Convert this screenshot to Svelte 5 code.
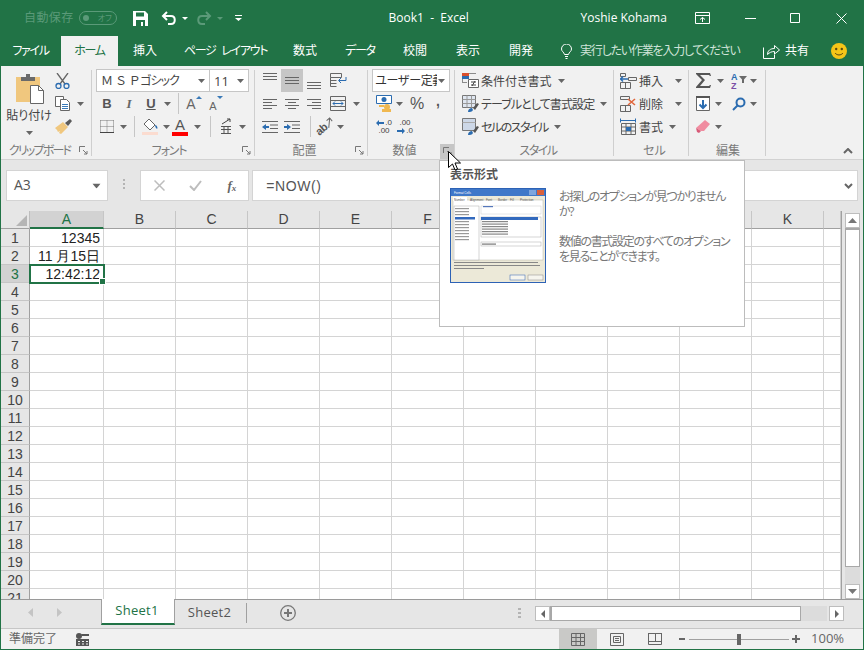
<script>
  const tabs = [
    ['ファイル', 'w61 k'], ['ホーム', 'w57 on k'], ['挿入', 'w54'], ['ページ レイアウト', 'w107 k'],
    ['数式', 'w52'], ['データ', 'w58 k'], ['校閲', 'w52'], ['表示', 'w54'], ['開発', 'w52']
  ];
  const cols = ['A', 'B', 'C', 'D', 'E', 'F', 'G', 'H', 'I', 'J', 'K', ''];
  const rows = Array.from({ length: 21 }, (_, i) => i + 1);
  const cells = { 1: '12345', 2: '11 月15日', 3: '12:42:12' };
</script>

{#snippet caret()}
  <svg class="caret" width="7" height="4" viewBox="0 0 7 4"><path d="M0 0h7L3.5 4z" /></svg>
{/snippet}

{#snippet launcher()}
  <svg width="9" height="9" viewBox="0 0 9 9" fill="none" stroke="#777"><path d="M.5 6V.5H6" /><path d="M4 4l4 4M8 5v3H5" /></svg>
{/snippet}

<div class="win">
  <header class="title">
    <span class="autosave">自動保存</span>
    <span class="toggle"><i></i><b>オフ</b></span>
    <svg class="qs save" width="15" height="15" viewBox="0 0 15 15"><path fill="#fff" d="M0 0h12l3 3v12H0z" /><path fill="#217346" d="M3 1.500h8v4H3zM3 9h9v6H3z" /><path fill="#fff" d="M8 11h2v4H8z" /></svg>
    <svg class="qs undo" width="16" height="15" viewBox="0 0 16 15" fill="none" stroke="#fff" stroke-width="2"><path d="M6 1L2 5l4 4" /><path d="M2 5h8c5 0 5 8 0 8H7" /></svg>
    <svg class="qc" width="6" height="3" viewBox="0 0 6 3"><path fill="#fff" d="M0 0h6L3 3z" /></svg>
    <svg class="qs redo" width="16" height="15" viewBox="0 0 16 15" fill="none" stroke="#5b9a79" stroke-width="2"><path d="M10 1l4 4-4 4" /><path d="M14 5H6c-5 0-5 8 0 8h3" /></svg>
    <svg class="qc" width="6" height="3" viewBox="0 0 6 3"><path fill="#5b9a79" d="M0 0h6L3 3z" /></svg>
    <svg class="qs cust" width="7" height="6" viewBox="0 0 7 6"><path fill="#fff" d="M0 0h7v1H0zM0 3h7L3.500 6z" /></svg>
    <span class="book">Book1 &nbsp;-&nbsp; Excel</span>
    <span class="user">Yoshie Kohama</span>
    <svg class="disp" width="15" height="12" viewBox="0 0 15 12" fill="none" stroke="#fff"><path d="M.5 .5h14v11H.5zM.5 3.500h14M7.500 10V5.500M5 7.500l2.500-2 2.500 2" /></svg>
    <svg class="wmin" width="11" height="1" viewBox="0 0 11 1"><path fill="#fff" d="M0 0h11v1H0z" /></svg>
    <svg class="wmax" width="10" height="10" viewBox="0 0 10 10" fill="none" stroke="#fff"><path d="M.5 .5h9v9h-9z" /></svg>
    <svg class="wclose" width="11" height="11" viewBox="0 0 11 11" fill="none" stroke="#fff"><path d="M.5 .5l10 10M10.500 .5l-10 10" /></svg>
  </header>

  <nav class="tabs">
    {#each tabs as [label, cls]}
      <span class="tab {cls}">{label}</span>
    {/each}
    <svg class="bulb" width="11" height="15" viewBox="0 0 11 15" fill="none" stroke="#fff"><path d="M3.500 10.500C3 8 .5 7.500 .5 5a5 5 0 0 1 10 0c0 2.500-2.500 3-3 5.500zM4 12.500h3M4.500 14.500h2" /></svg>
    <span class="tell">実行したい作業を入力してください</span>
    <svg class="share" width="17" height="15" viewBox="0 0 17 15" fill="none" stroke="#fff"><path d="M.5 3.500v11h11v-4" /><path d="M4.500 10.500c0-4 3-6 7-6V1.500l5 4.500-5 4V7.500c-3 0-5 1-7 3z" /></svg>
    <span class="kyoyu">共有</span>
    <svg class="smile" width="16" height="16" viewBox="0 0 16 16"><circle cx="8" cy="8" r="8" fill="#f5c518" /><circle cx="5.200" cy="6" r="1.200" fill="#5b4a10" /><circle cx="10.800" cy="6" r="1.200" fill="#5b4a10" /><path d="M4 10c2 2.600 6 2.600 8 0" fill="none" stroke="#5b4a10" /></svg>
  </nav>

  <section class="ribbon">
    <div class="group g-clip">
      <div class="body clipbody">
        <div class="paste">
          <svg width="29" height="30" viewBox="0 0 29 30"><path fill="#f0c77e" d="M0 3h24v25H0z" /><path fill="#6a6a6a" d="M5 3h14v4H5zM10 0h4v3h-4z" /><path fill="#fff" stroke="#666" d="M14.500 11.500h8l5 5v13h-13z" /><path fill="none" stroke="#666" d="M22.500 11.500v5h5" /></svg>
          <span class="pastelabel">貼り付け</span>
          {@render caret()}
        </div>
        <div class="col clipcol">
          <div class="row">
            <svg width="15" height="16" viewBox="0 0 15 16" fill="none"><path stroke="#666" stroke-width="1.300" d="M2 0l8 11M13 0L5 11" /><circle cx="3.500" cy="13" r="2.500" stroke="#2b6cb0" stroke-width="1.300" /><circle cx="11.500" cy="13" r="2.500" stroke="#2b6cb0" stroke-width="1.300" /></svg>
          </div>
          <div class="row">
            <svg width="16" height="15" viewBox="0 0 16 15" fill="#fff" stroke="#666"><path d="M.5 .5h8v10h-8z" /><path d="M5.500 3.500h6l3 3v8h-9z" /><path stroke="#3a7ab8" d="M7 8.500h6M7 10.500h6M7 12.500h6" /></svg>
            <span class="t w18">{@render caret()}</span>
          </div>
          <div class="row">
            <svg width="17" height="15" viewBox="0 0 17 15"><path fill="#5a5a5a" d="M10 4l5-4 2 2-4 5z" /><path fill="#f0c77e" d="M0 9l8-6 5 5-7 7-2-1 1-2-2 1-1-2z" /></svg>
          </div>
        </div>
      </div>
      <div class="glabel">クリップボード</div>
      <span class="launch">{@render launcher()}</span>
    </div>

    <div class="group g-font">
      <div class="body col">
        <div class="row">
          <span class="combo fontname"><span class="ctext"><span class="fnlat">Ｍ Ｓ Ｐ</span><span class="fnkana">ゴシック</span></span>{@render caret()}</span>
          <span class="combo fontsize"><span class="ctext">11</span>{@render caret()}</span>
        </div>
        <div class="row">
          <span class="t w22 fb">B</span>
          <span class="t w22 fi">I</span>
          <span class="t w22 fu">U</span>
          <span class="t w11">{@render caret()}</span>
          <span class="vs s5"></span>
          <span class="t w30 bigA">A<svg width="6" height="3" viewBox="0 0 6 3"><path fill="#3a7ab8" d="M3 0l3 3H0z" /></svg></span>
          <span class="t w14 smallA">A<svg width="6" height="3" viewBox="0 0 6 3"><path fill="#3a7ab8" d="M0 0h6L3 3z" /></svg></span>
        </div>
        <div class="row">
          <span class="t w22"><svg width="14" height="13" viewBox="0 0 14 13" fill="none" stroke="#777" stroke-dasharray="1 1"><path d="M.5 .5h13M.5 6.500h13M.5 .5v11M7 .5v11M13.500 .5v11" /><path stroke="#444" stroke-dasharray="none" d="M0 12.500h14" /></svg></span>
          <span class="t w10">{@render caret()}</span>
          <span class="vs s6"></span>
          <span class="t w30"><svg width="17" height="17" viewBox="0 0 17 17"><path fill="#fff" stroke="#666" d="M7 1l6 6-5 5-6-6z" /><path fill="#2b6cb0" d="M13 7c2 0 3 3 2 4-1-1-2-2-2-4z" /><path fill="#fbdcd0" d="M0 14h16v3H0z" /></svg></span>
          <span class="t w2">{@render caret()}</span>
          <span class="t w26 colorA">A<i></i></span>
          <span class="t w8">{@render caret()}</span>
          <span class="vs s8"></span>
          <span class="t w30"><svg width="12" height="17" viewBox="0 0 12 17" fill="none" stroke="#555"><path d="M2 6l8-5M7 1h3v3" stroke="#444" /><path d="M1 8.500h10M1 11.500h10M1 15.500h10M4 8v8M8 8v8" /></svg></span>
          <span class="t w2">{@render caret()}</span>
        </div>
      </div>
      <div class="glabel">フォント</div>
      <span class="launch">{@render launcher()}</span>
    </div>

    <div class="group g-align">
      <div class="body col">
        <div class="row">
          <span class="t w22 top"><svg width="14" height="7" viewBox="0 0 14 7" fill="#666"><path d="M0 0h14v1H0zM0 3h14v1H0zM0 6h14v1H0z" /></svg></span>
          <span class="t w22 pressed"><svg width="14" height="7" viewBox="0 0 14 7" fill="#666"><path d="M0 0h14v1H0zM0 3h14v1H0zM0 6h14v1H0z" /></svg></span>
          <span class="t w22 bot"><svg width="14" height="7" viewBox="0 0 14 7" fill="#666"><path d="M0 0h14v1H0zM0 3h14v1H0zM0 6h14v1H0z" /></svg></span>
          <span class="t w26"><svg width="17" height="15" viewBox="0 0 17 15" fill="none" stroke="#666"><path d="M.5 .5h11v4h-11zM.5 4.500v9M.5 7.500h6M.5 10.500h6M.5 13.500h6" /><path stroke="#2b6cb0" d="M16 4v3.500H9M11 5L8.500 7.500 11 10" /></svg></span>
        </div>
        <div class="row">
          <span class="t w22"><svg width="14" height="10" viewBox="0 0 14 10" fill="#666"><path d="M0 0h14v1H0zM0 3h9v1H0zM0 6h14v1H0zM0 9h9v1H0z" /></svg></span>
          <span class="t w22"><svg width="14" height="10" viewBox="0 0 14 10" fill="#666"><path d="M0 0h14v1H0zM3 3h8v1H3zM0 6h14v1H0zM3 9h8v1H3z" /></svg></span>
          <span class="t w22"><svg width="14" height="10" viewBox="0 0 14 10" fill="#666"><path d="M0 0h14v1H0zM5 3h9v1H5zM0 6h14v1H0zM5 9h9v1H5z" /></svg></span>
          <span class="t w26"><svg width="16" height="15" viewBox="0 0 16 15" fill="none" stroke="#666"><path d="M.5 .5h15v14H.5zM.5 4.500h15M.5 10.500h15" /><path stroke="#2b6cb0" d="M3 7.500h10M5 5.500l-2 2 2 2M11 5.500l2 2-2 2" /></svg></span>
          <span class="t w10">{@render caret()}</span>
        </div>
        <div class="row">
          <span class="t w22"><svg width="16" height="12" viewBox="0 0 16 12" fill="#666"><path d="M0 0h16v1H0zM8 3.500h8v1H8zM8 7h8v1H8zM0 11h16v1H0z" /><path fill="#2b6cb0" d="M0 6l4-3v2h3v2H4v2z" /></svg></span>
          <span class="t w22"><svg width="16" height="12" viewBox="0 0 16 12" fill="#666"><path d="M0 0h16v1H0zM8 3.500h8v1H8zM8 7h8v1H8zM0 11h16v1H0z" /><path fill="#2b6cb0" d="M7 6L3 3v2H0v2h3v2z" /></svg></span>
          <span class="vs s7"></span>
          <span class="t w28 orient"><span class="ab">ab</span><svg width="9" height="9" viewBox="0 0 9 9" fill="none" stroke="#666"><path d="M1 8l7-7M4 1h4v4" /></svg></span>
          <span class="t w2">{@render caret()}</span>
        </div>
      </div>
      <div class="glabel">配置</div>
      <span class="launch">{@render launcher()}</span>
    </div>

    <div class="group g-num">
      <div class="body col">
        <div class="row">
          <span class="combo numfmt"><span class="clip ctext">ユーザー定義</span>{@render caret()}</span>
        </div>
        <div class="row">
          <span class="t w24"><svg width="17" height="17" viewBox="0 0 17 17"><path fill="#fff" stroke="#2b6cb0" d="M.5 .5h15v8H.5z" /><circle cx="8" cy="4.500" r="2.500" fill="#2b6cb0" /><circle cx="11" cy="12" r="3" fill="#f0b850" /><path fill="#f0b850" d="M3 10h5v2H3zM6 14h9v3H6z" /></svg></span>
          <span class="t w6">{@render caret()}</span>
          <span class="t w30 pct">%</span>
          <span class="t w12 comma">,</span>
        </div>
        <div class="row">
          <span class="t w24 dec"><svg width="8" height="6" viewBox="0 0 8 6" fill="#2b6cb0"><path d="M0 3l3-3v2h5v2H3v2z" /></svg><em>.0</em><b>.00</b></span>
          <span class="t w18 dec"><b>.00</b><svg width="8" height="6" viewBox="0 0 8 6" fill="#2b6cb0"><path d="M8 3L5 0v2H0v2h5v2z" /></svg><em>.0</em></span>
        </div>
      </div>
      <div class="glabel">数値</div>
      <span class="launch hot">{@render launcher()}</span>
    </div>

    <div class="group g-style">
      <div class="body col">
        <div class="row item">
          <svg width="17" height="15" viewBox="0 0 17 15"><path fill="#d9502e" d="M0 0h7v3H0z" /><path fill="#2b6cb0" d="M0 3h7v3H0z" /><path fill="#8b8b8b" d="M7 0h7v1H7zM0 6h1v4H0zM0 9h5v1H0z" /><path fill="#fff" stroke="#666" d="M6.500 6.500h10v8h-10z" /><path stroke="#444" d="M9 9h5M9 12h5M10 13l3-5" fill="none" /></svg>
          <span class="txt">条件付き書式</span>{@render caret()}
        </div>
        <div class="row item">
          <svg width="17" height="17" viewBox="0 0 17 17"><path fill="#dfe6f0" stroke="#777" d="M.5 .5h13v12H.5z" /><path fill="none" stroke="#999" d="M.5 4.500h13M.5 8.500h13M5 .5v12M9.500 .5v12" /><path fill="#2b6cb0" d="M6 17c0-3 2-4 4-4l1 2c-1 2-3 2-5 2z" /><path fill="#555" d="M11 13l4-5 2 1-4 6z" /></svg>
          <span class="txt tight">テーブルとして書式設定</span>{@render caret()}
        </div>
        <div class="row item">
          <svg width="17" height="17" viewBox="0 0 17 17"><path fill="#cdd8e8" stroke="#777" d="M.5 .5h13v12H.5z" /><path fill="none" stroke="#aaa" d="M.5 4.500h13" /><path fill="#2b6cb0" d="M6 17c0-3 2-4 4-4l1 2c-1 2-3 2-5 2z" /><path fill="#555" d="M11 13l4-5 2 1-4 6z" /></svg>
          <span class="txt tighter">セルのスタイル</span>{@render caret()}
        </div>
      </div>
      <div class="glabel">スタイル</div>
    </div>

    <div class="group g-cell">
      <div class="body col">
        <div class="row item">
          <svg width="17" height="16" viewBox="0 0 17 16" fill="none" stroke="#666"><path d="M.5 .5h5v3h-5zM.5 9.500h10v6H.5zM5.500 9.500v6M8.500 4.500h8v3h-8z" /><path stroke="#2b6cb0" stroke-width="1.500" d="M8 6H1M3 3.500L.5 6 3 8.500" /></svg>
          <span class="txt cw">挿入</span>{@render caret()}
        </div>
        <div class="row item">
          <svg width="17" height="16" viewBox="0 0 17 16" fill="none" stroke="#666"><path d="M.5 .5h9v3h-9zM.5 9.500h10v6H.5zM5.500 9.500v6" /><path stroke="#e0653a" stroke-width="1.600" d="M8 3l7 6M15 3L8 9" /></svg>
          <span class="txt cw">削除</span>{@render caret()}
        </div>
        <div class="row item">
          <svg width="17" height="17" viewBox="0 0 17 17" fill="none" stroke="#666"><path stroke="#2b6cb0" d="M1 2.500h14M.5 .5v4M15.500 .5v4" /><path d="M1.500 5.500h14v11h-14zM1.500 9h14M1.500 13h14M6 5.500v11M11 5.500v11" /><path fill="#2b6cb0" stroke="none" d="M6 9h5v4H6z" /></svg>
          <span class="txt">書式</span>{@render caret()}
        </div>
      </div>
      <div class="glabel">セル</div>
    </div>

    <div class="group g-edit">
      <div class="body col">
        <div class="row">
          <span class="t w20"><svg width="15" height="15" viewBox="0 0 15 15"><path fill="#555" d="M0 0h14l1 3h-1l-1-1H4l5 5-5 6h9l1-1h1l-1 3H0v-1l6-7L0 1z" /></svg></span>
          <span class="t w14">{@render caret()}</span>
          <span class="t w24 sort"><svg width="16" height="17" viewBox="0 0 16 17"><text x="0" y="7.500" class="az blue">A</text><text x="0" y="17" class="az purple">Z</text><path fill="#6a6a6a" d="M8 4h8l-3 3.500V11h-2V7.500z" /></svg></span>
          <span class="t w4">{@render caret()}</span>
        </div>
        <div class="row">
          <span class="t w20"><svg width="14" height="15" viewBox="0 0 14 15"><path fill="#fff" stroke="#666" d="M.5 .5h13v14H.5z" /><path fill="#555" d="M0 0h14v2H0z" /><path fill="none" stroke="#2b6cb0" stroke-width="2" d="M7 4v8M3.500 8.500L7 12l3.500-3.500" /></svg></span>
          <span class="t w14 shift">{@render caret()}</span>
          <span class="t w24"><svg width="14" height="14" viewBox="0 0 14 14" fill="none" stroke="#2b6cb0" stroke-width="2"><circle cx="8.500" cy="5.500" r="4" /><path d="M5.500 8.500L1 13" /></svg></span>
          <span class="t w4">{@render caret()}</span>
        </div>
        <div class="row">
          <span class="t w20"><svg width="14" height="13" viewBox="0 0 14 13"><path fill="#f08ca0" d="M9 0l5 4-6 7-3 0-5-3z" /><path fill="#d85a78" d="M0 8l5 3-2 2-2-1z" /></svg></span>
          <span class="t w14 shift">{@render caret()}</span>
        </div>
      </div>
      <div class="glabel">編集</div>
    </div>

    <div class="collapse">
      <svg width="10" height="6" viewBox="0 0 10 6" fill="none" stroke="#666" stroke-width="2"><path d="M1 5l4-4 4 4" /></svg>
    </div>
  </section>

  <section class="formula">
    <div class="namebox"><span>A3</span>{@render caret()}</div>
    <div class="dots"><i></i><i></i><i></i></div>
    <div class="fbtns">
      <svg width="11" height="11" viewBox="0 0 11 11" fill="none" stroke="#bdbdbd" stroke-width="1.500"><path d="M.5 .5l10 10M10.500 .5l-10 10" /></svg>
      <svg width="13" height="11" viewBox="0 0 13 11" fill="none" stroke="#bdbdbd" stroke-width="2"><path d="M1 6l4 4 7-9" /></svg>
      <span class="fx">f<sub>x</sub></span>
    </div>
    <div class="finput">
      <span>=NOW()</span>
      <svg width="9" height="6" viewBox="0 0 9 6" fill="none" stroke="#666" stroke-width="2"><path d="M1 1l3.500 3.500L8 1" /></svg>
    </div>
  </section>

  <section class="sheet">
    <div class="grid">
      <div class="corner"><svg width="11" height="11" viewBox="0 0 11 11"><path fill="#b5b5b5" d="M11 0v11H0z" /></svg></div>
      {#each cols as c, i}
        <div class="chead" class:sel={i === 0}>{c}</div>
      {/each}
      {#each rows as r}
        <div class="rhead" class:sel={r === 3}>{r}</div>
        {#each cols as c, i}
          <div class="cell" class:cur={r === 3 && i === 0}>
            {#if i === 0 && cells[r]}{cells[r]}{/if}
            {#if r === 3 && i === 0}<span class="handle"></span>{/if}
          </div>
        {/each}
      {/each}
    </div>
    <div class="vbar">
      <span class="sbtn"><svg width="9" height="5" viewBox="0 0 9 5"><path fill="#777" d="M4.500 0L9 5H0z" /></svg></span>
      <span class="vthumb"></span>
      <span class="vtrack"></span>
      <span class="sbtn"><svg width="9" height="5" viewBox="0 0 9 5"><path fill="#777" d="M0 0h9L4.500 5z" /></svg></span>
    </div>
  </section>

  <section class="sheetbar">
    <div class="nav">
      <svg width="5" height="9" viewBox="0 0 5 9"><path fill="#c4c4c4" d="M5 0v9L0 4.500z" /></svg>
      <svg width="5" height="9" viewBox="0 0 5 9"><path fill="#c4c4c4" d="M0 0v9l5-4.500z" /></svg>
    </div>
    <span class="stab cur">Sheet1</span>
    <span class="stab">Sheet2</span>
    <svg class="plus" width="16" height="16" viewBox="0 0 16 16" fill="none" stroke="#777"><circle cx="8" cy="8" r="7.300" stroke-width="1.300" /><path stroke-width="2" d="M8 4v8M4 8h8" /></svg>
    <div class="dots sdots"><i></i><i></i><i></i></div>
    <div class="hbar">
      <span class="hbtn"><svg width="4" height="8" viewBox="0 0 4 8"><path fill="#666" d="M4 0v8L0 4z" /></svg></span>
      <span class="hthumb"></span>
      <span class="htrack"></span>
      <span class="hbtn right"><svg width="4" height="8" viewBox="0 0 4 8"><path fill="#666" d="M0 0v8l4-4z" /></svg></span>
    </div>
  </section>

  <footer class="status">
    <span class="ready">準備完了</span>
    <svg class="macro" width="13" height="13" viewBox="0 0 13 13"><circle cx="3" cy="3" r="3" fill="#555" /><path fill="#555" d="M5 1h8v2H6zM0 6h13v7H0z" /><path fill="#f1f1f1" d="M2 8h2v1H2zM6 8h2v1H6zM10 8h2v1h-2zM2 10.500h2v1H2zM6 10.500h2v1H6zM10 10.500h2v1h-2z" /></svg>
    <span class="view on"><svg width="14" height="13" viewBox="0 0 14 13" fill="none" stroke="#666"><path d="M.5 .5h13v12H.5zM.5 4.500h13M.5 8.500h13M5 .5v12M9.500 .5v12" /></svg></span>
    <span class="view v2"><svg width="14" height="13" viewBox="0 0 14 13" fill="none" stroke="#666"><path d="M.5 .5h13v12H.5zM3.500 3.500h7v6h-7zM5 5.500h4M5 7.500h4" /></svg></span>
    <span class="view"><svg width="14" height="12" viewBox="0 0 14 12" fill="none" stroke="#666"><path d="M.5 0v11.500h13V0M.5 8.500h13M7.500 0v8" /><path d="M.5 .5h13" /></svg></span>
    <span class="minus"></span>
    <span class="slider"><i></i></span>
    <svg class="zplus" width="8" height="8" viewBox="0 0 8 8"><path fill="#666" d="M3 0h2v3h3v2H5v3H3V5H0V3h3z" /></svg>
    <span class="zoom">100%</span>
  </footer>

  <aside class="tip">
    <h4>表示形式</h4>
    <div class="tipbody">
      <svg class="thumb" width="96" height="95" viewBox="0 0 96 95">
        <rect width="96" height="95" fill="#ece9d8" />
        <rect x="0.500" y="0.500" width="95" height="94" fill="none" stroke="#2d62b5" />
        <rect x="1" y="1" width="94" height="7" fill="#3f78c9" />
        <text x="4" y="6" class="mini white">Format Cells</text>
        <rect x="87" y="2" width="7" height="5" fill="#d9603a" />
        <rect x="79" y="2" width="7" height="5" fill="#7ea6dd" />
        <rect x="3" y="12" width="90" height="60" fill="#fff" stroke="#b8b8a8" stroke-width=".5" />
        <rect x="3" y="9" width="14" height="4" fill="#fff" />
        <text x="4" y="12.500" class="mini">Number</text>
        <text x="20" y="12.500" class="mini">Alignment</text>
        <text x="36" y="12.500" class="mini">Font</text>
        <text x="48" y="12.500" class="mini">Border</text>
        <text x="60" y="12.500" class="mini">Fill</text>
        <text x="70" y="12.500" class="mini">Protection</text>
        <rect x="4" y="18" width="25" height="54" fill="#fff" stroke="#aaa" stroke-width=".5" />
        <rect x="5" y="29" width="20" height="2.500" fill="#3269bd" />
        {#each [20, 23, 26, 33, 36, 39, 42, 45, 48, 51] as y}
          <rect x="5" y={y} width="14" height="1.200" fill="#999" />
        {/each}
        <rect x="31" y="18" width="60" height="8" fill="#fff" stroke="#ccc" stroke-width=".5" />
        <rect x="33" y="18" width="10" height="1.200" fill="#5577bb" />
        <rect x="31" y="29" width="60" height="20" fill="#fff" stroke="#aaa" stroke-width=".5" />
        <rect x="31" y="29" width="57" height="3" fill="#3269bd" />
        {#each [33, 35.500, 38, 40.500, 43, 45.500] as y}
          <rect x="32" y={y} width="26" height="1.200" fill="#888" />
        {/each}
        <rect x="31" y="54" width="60" height="4" fill="#fff" stroke="#aaa" stroke-width=".5" />
        <rect x="32" y="55.500" width="14" height="1.200" fill="#777" />
        <rect x="4" y="74" width="84" height="1" fill="#888" />
        <rect x="4" y="77" width="86" height="1" fill="#888" />
        <rect x="4" y="80" width="30" height="1" fill="#888" />
        <rect x="60" y="87" width="15" height="5" fill="#f6f5ee" stroke="#2d62b5" stroke-width=".5" />
        <rect x="78" y="87" width="15" height="5" fill="#f6f5ee" stroke="#888" stroke-width=".5" />
      </svg>
      <p>お探しのオプションが見つかりません<br />か?<br /><br />数値の書式設定のすべてのオプション<br />を見ることができます。</p>
    </div>
  </aside>

  <svg class="cursor" width="13" height="20" viewBox="0 0 13 20"><path fill="#fff" stroke="#000" d="M.5 .5v16l4-3.500 2.500 6 2.500-1-2.500-6h5.500z" /></svg>
</div>

<style>
  :global(body) { margin: 0; background: #f1f1f1; }
  .win {
    position: relative; width: 864px; height: 650px; box-sizing: border-box; overflow: hidden;
    display: flex; flex-direction: column; border: 1px solid #217346; border-top: 0;
    font: 12px/1.2 "Open Sans", "Noto Sans CJK JP", sans-serif;
    font-feature-settings: "palt"; color: #444;
  }
  svg { display: block; flex: none; }
  .caret { fill: #666; }

  .title { flex: none; height: 36px; margin-left: -1px; background: #217346; color: #fff; display: flex; align-items: center; }
  .autosave { margin-left: 24px; font-size: 12px; letter-spacing: .4px; color: #5b9a79; }
  .toggle { margin-left: 5px; width: 38px; height: 14px; box-sizing: border-box; border: 1px solid #5b9a79; border-radius: 8px; display: flex; align-items: center; padding: 0 3px; color: #5b9a79; font-size: 8px; }
  .toggle i { width: 6px; height: 6px; border-radius: 50%; background: #5b9a79; }
  .toggle b { font-weight: 400; margin-left: 9px; }
  .save { margin-left: 16px; }
  .undo { margin-left: 13px; }
  .qc { margin-left: 5px; }
  .redo { margin-left: 8px; }
  .cust { margin-left: 12px; }
  .book { margin-left: 147px; width: 180px; color: #fff; }
  .user { margin-left: 12px; width: 114px; color: #fff; }
  .wmin { margin-left: 35px; }
  .wmax { margin-left: 34px; }
  .wclose { margin-left: 36px; }

  .tabs { flex: none; height: 30px; margin-left: -1px; background: #217346; color: #fff; display: flex; align-items: center; }
  .tab { height: 30px; display: flex; align-items: center; justify-content: center; white-space: pre; }
  .tab.k { letter-spacing: -1.3px; word-spacing: 4px; }
  .tab.on { background: #f1f1f1; color: #217346; }
  .w61 { width: 61px; } .w57 { width: 57px; } .w54 { width: 54px; } .w107 { width: 107px; } .w52 { width: 52px; } .w58 { width: 58px; }
  .bulb { margin-left: 14px; }
  .tell { margin-left: 8px; width: 161px; white-space: nowrap; color: #cfe3d8; letter-spacing: -1.2px; }
  .share { margin-left: 22px; }
  .kyoyu { margin-left: 5px; }
  .smile { margin-left: 22px; }

  .ribbon { flex: none; height: 94px; box-sizing: border-box; background: #f1f1f1; border-bottom: 1px solid #d2d2d2; display: flex; position: relative; }
  .group { position: relative; box-sizing: border-box; height: 93px; padding-top: 3px; display: flex; flex-direction: column; }
  .group::after { content: ""; position: absolute; right: 0; top: 4px; bottom: 3px; width: 1px; background: #cfcfcf; }
  .g-clip { width: 91px; } .g-font { width: 163px; padding-left: 4px; } .g-align { width: 113px; padding-left: 4px; } .g-num { width: 87px; padding-left: 4px; } .g-style { width: 159px; padding-left: 7px; } .g-cell { width: 75px; padding-left: 6px; } .g-edit { width: 77px; padding-left: 4px; }
  .body { height: 74px; }
  .glabel { text-align: center; color: #7a7a7a; height: 16px; line-height: 16px; white-space: nowrap; }
  .g-clip .glabel { padding-right: 14px; letter-spacing: -1.8px; }
  .g-font .glabel { padding-right: 13px; letter-spacing: -1.2px; }
  .g-align .glabel { padding-right: 18px; }
  .g-num .glabel { padding-right: 18px; }
  .g-style .glabel { letter-spacing: -1.5px; }
  .g-edit .glabel { padding-right: 3px; }
  .launch { position: absolute; right: 4px; bottom: 4px; width: 9px; height: 9px; }
  .launch.hot { right: 0; bottom: 0; width: 15px; height: 15px; background: #c6c6c6; display: flex; align-items: center; justify-content: center; }
  .col { display: flex; flex-direction: column; }
  .row { height: 23px; flex: none; display: flex; align-items: center; }
  .t { flex: none; height: 23px; display: flex; align-items: center; justify-content: center; }
  .w2 { width: 2px; } .w4 { width: 4px; } .w6 { width: 6px; } .w8 { width: 8px; } .w10 { width: 10px; } .w11 { width: 11px; } .w12 { width: 12px; } .w14 { width: 14px; } .w18 { width: 18px; } .w20 { width: 20px; } .w22 { width: 22px; } .w24 { width: 24px; } .w26 { width: 26px; } .w28 { width: 28px; } .w30 { width: 30px; }
  .vs { flex: none; width: 1px; height: 21px; background: #c6c6c6; }
  .s5 { margin-left: 5px; } .s6 { margin-left: 6px; } .s7 { margin-left: 7px; } .s8 { margin-left: 9px; }

  .clipbody { display: flex; }
  .paste { width: 50px; padding-top: 5px; padding-left: 6px; box-sizing: border-box; display: flex; flex-direction: column; align-items: center; }
  .paste svg:first-child { margin-left: 9px; align-self: flex-start; }
  .pastelabel { margin-top: 5px; color: #444; white-space: nowrap; }
  .paste .caret { margin-top: 8px; }
  .clipcol { padding-left: 4px; }

  .combo { box-sizing: border-box; height: 23px; background: #fff; border: 1px solid #c6c6c6; display: flex; align-items: center; justify-content: space-between; padding: 0 4px; white-space: nowrap; }
  .ctext { padding-top: 2px; }
  .fontname { width: 114px; font-size: 12px; }
  .fnlat { font-feature-settings: normal; letter-spacing: -.6px; }
  .fnkana { letter-spacing: -1px; }
  .fontsize { width: 40px; margin-left: -1px; font-size: 13px; }
  .numfmt { width: 78px; padding: 0 4px 0 2px; }
  .clip { width: 62px; overflow: hidden; color: #333; font-feature-settings: normal; letter-spacing: -.5px; }
  .fb { font: 700 13px "Liberation Sans", sans-serif; color: #555; }
  .fi { font: italic 700 13px "Liberation Serif", serif; color: #666; }
  .fu { font: 700 13px "Liberation Sans", sans-serif; color: #555; text-decoration: underline; }
  .bigA, .smallA { color: #666; align-items: flex-end; padding-bottom: 2px; box-sizing: border-box; font-family: "Liberation Sans", sans-serif; }
  .bigA { font-size: 14px; } .smallA { font-size: 11px; }
  .bigA svg, .smallA svg { align-self: flex-start; margin-top: 4px; }
  .colorA { position: relative; font: 15px "Liberation Sans", sans-serif; color: #555; padding-bottom: 5px; box-sizing: border-box; }
  .colorA i { position: absolute; left: 5px; right: 5px; top: 17px; height: 4px; background: #f00; }
  .top { align-items: flex-start; padding-top: 4px; box-sizing: border-box; }
  .bot { align-items: flex-end; padding-bottom: 3px; box-sizing: border-box; }
  .pressed { background: #c6c6c6; }
  .orient { font: 700 11px/11px "Liberation Sans", sans-serif; color: #555; transform: rotate(-40deg); }
  .ab { letter-spacing: -.5px; }
  .pct { font: 16px "Liberation Sans", sans-serif; color: #555; }
  .comma { font: 700 14px "Liberation Sans", sans-serif; color: #555; padding-bottom: 6px; box-sizing: border-box; }
  .dec { position: relative; font: 8px/8px "Liberation Sans", sans-serif; color: #444; flex-wrap: wrap; align-content: center; }
  .dec em { font-style: normal; margin-left: 1px; }
  .dec b { font-weight: 400; width: 100%; text-align: center; }
  .item { gap: 2px; }
  .txt { color: #444; white-space: nowrap; padding-top: 3px; }
  .tight { letter-spacing: -.9px; }
  .tighter { letter-spacing: -1.5px; }
  .item .caret { margin-left: 4px; }
  .cw { margin-right: 6px; }
  .az { font: 700 9px "Liberation Sans", sans-serif; }
  .blue { fill: #2b6cb0; } .purple { fill: #7b4fa6; }
  .shift { padding-right: 4px; box-sizing: border-box; }
  .collapse { position: absolute; right: 10px; bottom: 5px; }

  .formula { flex: none; height: 51px; background: #e6e6e6; display: flex; align-items: flex-start; padding: 10px 5px 0; box-sizing: border-box; }
  .namebox, .fbtns, .finput { box-sizing: border-box; height: 31px; background: #fff; border: 1px solid #d4d4d4; display: flex; align-items: center; }
  .namebox { width: 102px; justify-content: space-between; padding: 0 7px; font-size: 14px; color: #555; }
  .namebox .caret { transform: scale(1.200); }
  .dots { width: 32px; display: flex; flex-direction: column; align-items: center; gap: 2px; padding-top: 9px; }
  .dots i { width: 2px; height: 2px; background: #b4b4b4; }
  .fbtns { width: 110px; padding: 0 12px 0 13px; justify-content: space-between; }
  .fx { font: italic 700 13px "Liberation Serif", serif; color: #666; }
  .fx sub { font-size: 9px; vertical-align: -1px; }
  .finput { margin-left: 3px; width: 608px; justify-content: space-between; padding: 0 4px 0 13px; font: 14px "Liberation Sans", sans-serif; letter-spacing: .6px; color: #555; }

  .sheet { flex: none; height: 388px; display: flex; background: #e6e6e6; overflow: hidden; }
  .grid { width: 841px; box-sizing: border-box; border-right: 1px solid #a0a0a0; flex: none; display: grid; grid-template-columns: 29px 74px repeat(10, 72px) 17px; grid-auto-rows: 18px; background: #fff; font: 14px/19px "Liberation Sans", sans-serif; color: #222; }
  .corner { background: #e6e6e6; border-right: 1px solid #bdbdbd; border-bottom: 1px solid #a0a0a0; box-sizing: border-box; display: flex; justify-content: flex-end; align-items: flex-end; padding: 0 2px 2px 0; }
  .chead { background: #e6e6e6; box-sizing: border-box; border-right: 1px solid #c6c6c6; border-bottom: 1px solid #a0a0a0; text-align: center; color: #444; line-height: 17px; }
  .chead.sel { background: #d2d2d2; color: #217346; border-bottom: 2px solid #217346; }
  .rhead { background: #e6e6e6; box-sizing: border-box; border-right: 1px solid #a0a0a0; border-bottom: 1px solid #c6c6c6; color: #444; text-align: center; }
  .rhead.sel { background: #d2d2d2; color: #217346; }
  .cell { position: relative; box-sizing: border-box; border-right: 1px solid #d4d4d4; border-bottom: 1px solid #d4d4d4; text-align: right; padding-right: 3px; white-space: nowrap; }
  .cell.cur { outline: 2px solid #217346; outline-offset: -1px; z-index: 1; }
  .handle { position: absolute; right: -3px; bottom: -3px; width: 5px; height: 5px; background: #217346; border: 1px solid #fff; }
  .vbar { width: 15px; margin: 2px 0 0 3px; display: flex; flex-direction: column; flex: none; }
  .sbtn { box-sizing: border-box; height: 15px; flex: none; background: #fff; border: 1px solid #bdbdbd; display: flex; align-items: center; justify-content: center; }
  .vthumb { box-sizing: border-box; height: 339px; flex: none; background: #fff; border: 1px solid #a8a8a8; border-top-width: 2px; }
  .vtrack { flex: 1; background: #dcdcdc; }

  .sheetbar { flex: none; height: 29px; box-sizing: border-box; background: #e6e6e6; border-top: 1px solid #9a9a9a; display: flex; align-items: flex-start; }
  .nav { width: 100px; height: 25px; box-sizing: border-box; display: flex; align-items: center; gap: 24px; padding-left: 27px; }
  .stab { box-sizing: border-box; width: 72px; height: 20px; margin-top: 3px; padding-right: 2px; display: flex; align-items: center; justify-content: center; font-size: 13px; letter-spacing: .3px; color: #555; border-right: 1px solid #a0a0a0; }
  .stab.cur { width: 74px; background: #fff; color: #217346; border-left: 1px solid #a0a0a0; border-right: 1px solid #a0a0a0; border-bottom: 2px solid #217346; margin-top: -1px; height: 26px; }
  .plus { margin: 5px 0 0 33px; }
  .sdots { width: 4px; margin-left: 221px; padding-top: 8px; }
  .sdots i { width: 3px; }
  .hbar { margin: 6px 0 0 14px; display: flex; height: 15px; }
  .hbtn { box-sizing: border-box; width: 15px; height: 15px; background: #fff; border: 1px solid #bdbdbd; display: flex; align-items: center; justify-content: center; }
  .hbtn.right { margin-left: 2px; }
  .hthumb { box-sizing: border-box; width: 251px; background: #fff; border: 1px solid #a8a8a8; border-left-width: 2px; }
  .htrack { width: 26px; background: #dcdcdc; }

  .status { flex: 1; min-height: 0; background: #f1f1f1; border-top: 1px solid #c6c6c6; box-sizing: border-box; display: flex; align-items: center; color: #666; }
  .ready { margin-left: 8px; }
  .macro { margin-left: 19px; }
  .view { height: 100%; display: flex; align-items: center; justify-content: center; width: 38px; }
  .view.on { margin-left: 470px; background: #c9c9c7; }
  .v2 { margin-left: 1px; }
  .minus { margin-left: 5px; width: 6px; height: 2px; background: #666; }
  .slider { position: relative; margin-left: 4px; width: 100px; height: 1px; background: #a0a0a0; }
  .slider i { position: absolute; left: 48px; top: -5px; width: 4px; height: 11px; background: #666; }
  .zplus { margin-left: 3px; }
  .zoom { margin-left: 11px; font-size: 13px; color: #666; }

  .tip { position: absolute; left: 438px; top: 160px; width: 306px; height: 167px; box-sizing: border-box; background: #fff; border: 1px solid #bcbcbc; padding: 5px 10px; z-index: 3; }
  .tip h4 { margin: 0; font-size: 12px; line-height: 17px; font-weight: 700; color: #555; }
  .tipbody { display: flex; margin-top: 5px; }
  .tip p { margin: 0 0 0 13px; padding-top: 1px; color: #777; font-size: 12px; line-height: 15px; white-space: nowrap; letter-spacing: -1.3px; }
  .mini { font: 3px "Liberation Sans", sans-serif; fill: #555; }
  .white { fill: #fff; }
  .cursor { position: absolute; left: 447px; top: 151px; z-index: 4; }
</style>
